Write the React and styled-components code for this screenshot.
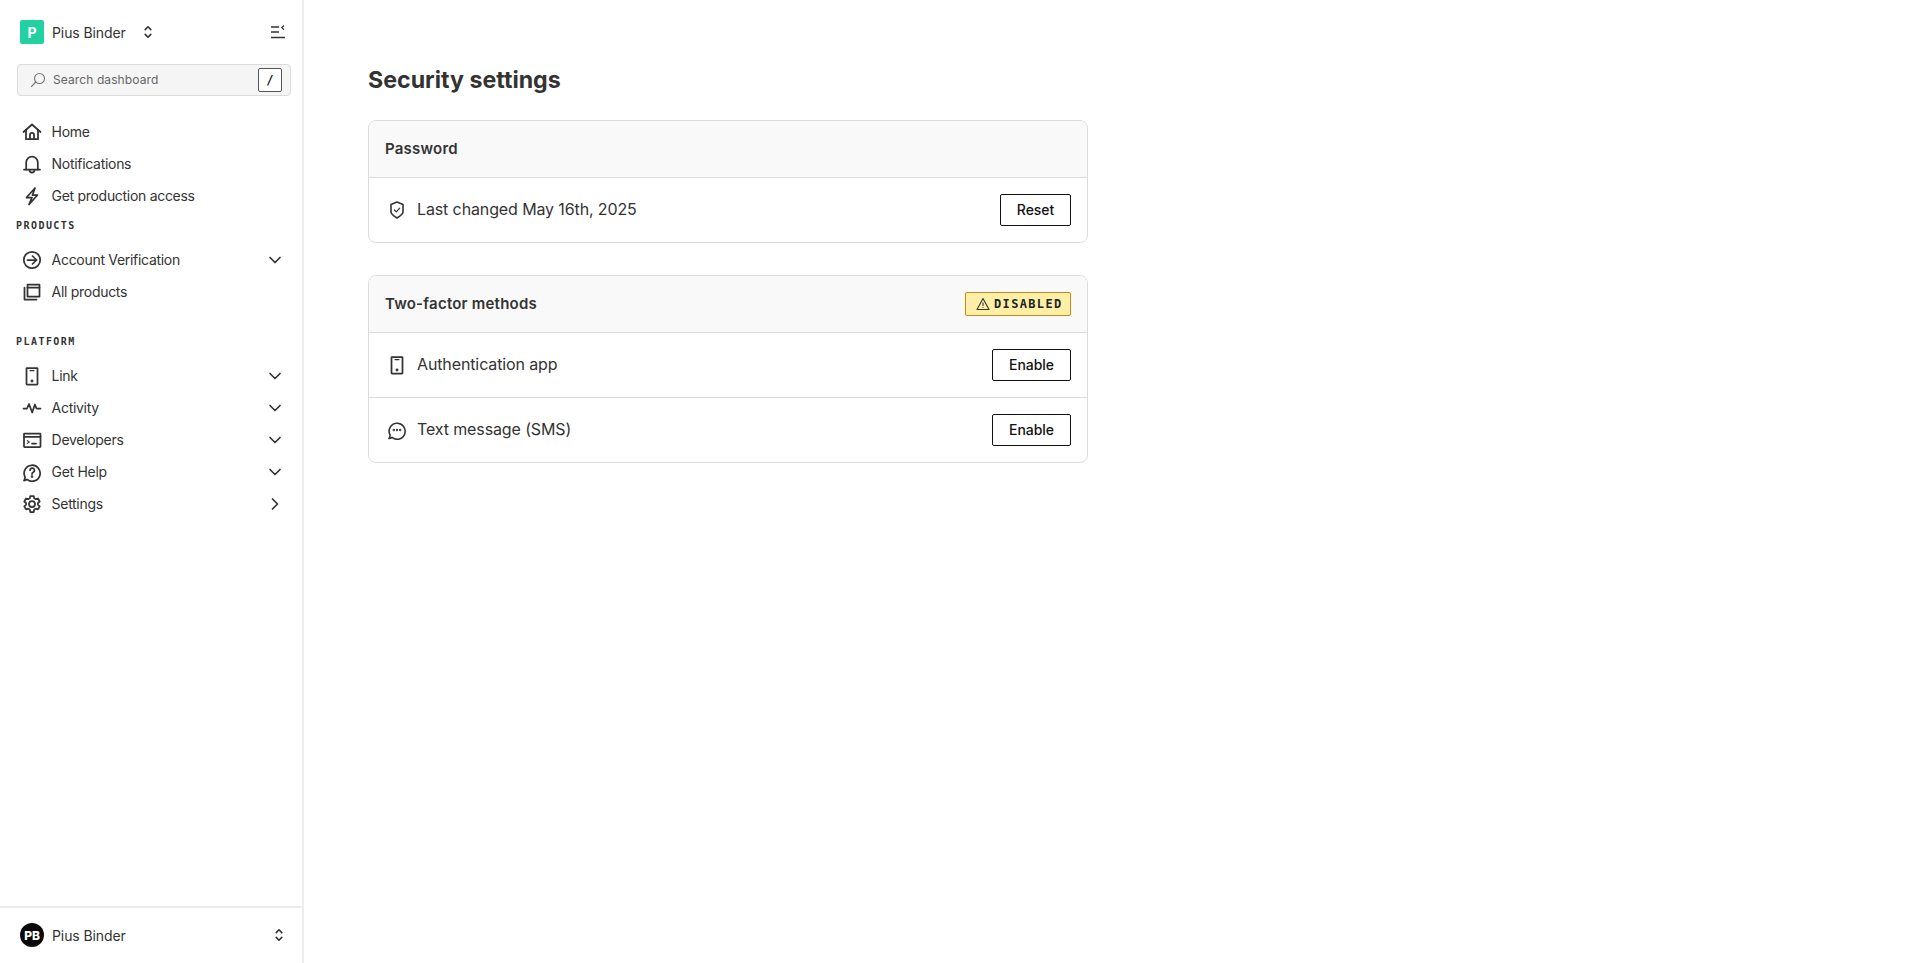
import React from "react";
import styled, { createGlobalStyle } from "styled-components";

const Global = createGlobalStyle`
  html, body { margin: 0; padding: 0; background: #fff; }
  body { font-family: Inter, "Liberation Sans", sans-serif; color: #333; }
  * { box-sizing: border-box; }
`;

const Page = styled.div`
  display: flex;
  height: 963px;
  overflow: hidden;
`;
const Sidebar = styled.aside`
  width: 304px;
  flex: none;
  height: 100%;
  border-right: 2px solid #ececec;
  display: flex;
  flex-direction: column;
`;
const Top = styled.div`
  flex: 1;
  padding: 20px 0 0;
`;
const AccountRow = styled.div`
  display: flex;
  align-items: center;
  height: 24px;
  padding: 0 17px 0 20px;
`;
const Logo = styled.div`
  width: 24px;
  height: 24px;
  border-radius: 2px;
  background: #21d19f;
  color: #fff;
  font-size: 14px;
  font-weight: 700;
  display: flex;
  align-items: center;
  justify-content: center;
  margin-right: 8px;
`;
const AccountName = styled.span`
  font-size: 14px;
  letter-spacing: -0.1px;
  color: #333;
  width: 88px;
`;
const Spacer = styled.div`
  flex: 1;
`;
const Search = styled.div`
  margin: 20px 0 0 17px;
  width: 274px;
  height: 32px;
  border: 1px solid #dcdcdc;
  border-radius: 4px;
  background: #f5f5f5;
  display: flex;
  align-items: center;
  padding: 0 8px 0 12px;
  color: #666;
  font-size: 12px;
  letter-spacing: 0.1px;
`;
const SearchText = styled.span`
  margin-left: 7px;
  flex: 1;
  padding-bottom: 1px;
`;
const Key = styled.div`
  width: 24px;
  height: 24px;
  border: 1px solid #555;
  border-radius: 2px;
  background: #fff;
  color: #111;
  font-family: "DejaVu Sans Mono", monospace;
  font-size: 12px;
  font-weight: 700;
  display: flex;
  align-items: center;
  justify-content: center;
`;
const Nav = styled.nav`
  margin-top: 20px;
  padding: 0 17px 0 22px;
`;
const NavRow = styled.div`
  display: flex;
  align-items: center;
  height: 32px;
  color: #333;
  font-size: 14px;
  letter-spacing: -0.3px;
  & > svg:first-child { margin-right: 9.6px; flex: none; }
`;
const NavLabel = styled.span`
  flex: 1;
  padding-bottom: 1px;
`;
const Section = styled.div`
  font-family: "DejaVu Sans Mono", monospace;
  font-size: 10px;
  font-weight: 700;
  letter-spacing: 1.45px;
  color: #333;
  height: 12px;
  line-height: 12px;
  margin: ${p => p.$top}px 0 ${p => p.$bottom}px -6px;
`;
const Footer = styled.div`
  height: 57px;
  border-top: 2px solid #ececec;
  display: flex;
  align-items: center;
  padding: 0 15px 1px 20px;
  font-size: 14px;
  letter-spacing: -0.1px;
  color: #333;
`;
const Avatar = styled.div`
  width: 24px;
  height: 24px;
  border-radius: 50%;
  background: #0a0a0a;
  color: #fff;
  font-size: 12px;
  font-weight: 800;
  letter-spacing: -0.2px;
  display: flex;
  align-items: center;
  justify-content: center;
  margin-right: 8px;
`;
const Main = styled.main`
  flex: none;
  width: 720px;
  margin-left: 64px;
  padding-top: 64px;
`;
const Title = styled.h1`
  margin: 0 0 24px;
  padding-top: 1px;
  font-size: 23.2px;
  line-height: 31px;
  font-weight: 700;
  color: #333;
`;
const Card = styled.section`
  border: 1px solid #dcdcdc;
  border-radius: 8px;
  margin-bottom: 32px;
  overflow: hidden;
`;
const CardHead = styled.header`
  display: flex;
  align-items: center;
  justify-content: space-between;
  height: 56px;
  padding: 0 16px 0 16px;
  background: #f9f9f9;
  font-size: 15px;
  font-weight: 600;
  letter-spacing: 0.22px;
  color: #333;
`;
const HeadLabel = styled.span`
  padding-bottom: 2px;
`;
const Row = styled.div`
  display: flex;
  align-items: center;
  height: 65px;
  padding: 0 16px 0 18px;
  border-top: 1px solid #dcdcdc;
  font-size: 16px;
  color: #333;
  letter-spacing: -0.12px;
  & > svg { margin-right: 10px; flex: none; }
`;
const RowText = styled.span`
  flex: 1;
  padding-bottom: 2px;
`;
const Button = styled.button`
  height: 32px;
  width: ${p => p.$w}px;
  border: 1px solid #111;
  border-radius: 2px;
  background: #fff;
  color: #111;
  font-family: inherit;
  font-size: 14px;
  font-weight: 500;
  letter-spacing: -0.05px;
  padding: 0 0 1px;
`;
const Badge = styled.div`
  display: flex;
  align-items: center;
  width: 106px;
  height: 24px;
  padding: 0 0 0 10px;
  gap: 4px;
  border: 1px solid #c8891a;
  border-radius: 2px;
  background: #fdf0a6;
  color: #222;
  font-family: "DejaVu Sans Mono", monospace;
  font-size: 12px;
  font-weight: 700;
  letter-spacing: 1.35px;
`;

const Ico = ({ size = 20, children, sw = 1.75 }) => (
  <svg width={size} height={size} viewBox="0 0 20 20" fill="none" stroke="currentColor" strokeWidth={sw} strokeLinecap="round" strokeLinejoin="round">
    {children}
  </svg>
);

const Home = () => <Ico><path d="M1.5 10 10 2.5 18.5 10" /><path d="M4 8v9.2h12V8" /><path d="M8 17v-4.2a2 2 0 0 1 4 0V17" /></Ico>;
const Bell = () => <Ico><path d="M2 15.5h16" /><path d="M4.2 15.5V8.5a5.8 5.8 0 0 1 11.6 0v7" /><path d="M7.5 16a2.5 2.5 0 0 0 5 0" /></Ico>;
const Zap = () => <Ico><path d="M13 2 4.5 11.5H10L7 18.5l8.5-9.5H10.5L13 2Z" /></Ico>;
const ArrowCircle = () => <Ico><circle cx="10" cy="10" r="8.2" /><path d="M5.5 10h9" /><path d="M10.5 6l4 4-4 4" /></Ico>;
const Stack = () => <Ico><rect x="5.5" y="2.5" width="12" height="12" /><path d="M5.5 5.5h12" /><path d="M2.5 5.5v12h12" /></Ico>;
const Phone = () => <Ico><rect x="4.5" y="2" width="11" height="16.5" rx=".6" /><path d="M8 4.6h4" strokeWidth="1.2" /><circle cx="10" cy="15" r=".6" fill="currentColor" /></Ico>;
const Pulse = () => <Ico><path d="M1.5 10.5H5l2-4.5 3.2 8.5 2.7-8 1.6 4H18.5" /></Ico>;
const Terminal = () => <Ico><rect x="2" y="3.5" width="16.5" height="13.5" rx=".6" /><path d="M2 6.8h16.5" /><path d="M5.3 10.6l2 1.4-2 1.4" strokeWidth="1.1" /><path d="M10 13.6h4" /></Ico>;
const HelpBubble = () => <Ico><path d="M2 18.5c1.3 0 2.2-.4 3-1.1a8 8 0 1 0-2-2.5c.2 1.3-.2 2.5-1 3.6Z" /><path d="M8 8.2a2.2 2.2 0 1 1 3.2 2c-.8.4-1.2.9-1.2 1.8" /><circle cx="10" cy="14.6" r=".5" fill="currentColor" /></Ico>;
const Gear = () => <Ico><circle cx="10" cy="10" r="3" /><path d="M8.3 2h3.4l.5 2.3 1.6.9 2.2-.7 1.7 3-1.7 1.5v1.9l1.7 1.5-1.7 3-2.2-.7-1.6.9-.5 2.4H8.3l-.5-2.4-1.6-.9-2.2.7-1.7-3 1.7-1.5V9L2.3 7.5l1.7-3 2.2.7 1.6-.9L8.3 2Z" /></Ico>;
const ChevD = () => <Ico sw={1.7}><path d="M5 7.5 10 12.5l5-5" /></Ico>;
const ChevR = () => <Ico sw={1.7}><path d="M7.5 5 12.5 10l-5 5" /></Ico>;
const UpDown = () => <Ico size={16} sw={2}><path d="M6.5 7 10 3.5 13.5 7" /><path d="M6.5 13 10 16.5 13.5 13" /></Ico>;
const Collapse = () => (
  <svg width="14" height="14" viewBox="0 0 14 14" fill="none" stroke="#333" strokeWidth="1.5">
    <path d="M0 2h8M0 7h8M0 12.5h14" />
    <path d="M13 .5 10.8 2.6 13 4.7" strokeWidth="1.3" />
  </svg>
);
const SearchIco = () => (
  <svg width="16" height="16" viewBox="0 0 16 16" fill="none" stroke="#777" strokeWidth="1.1">
    <circle cx="9.5" cy="6.5" r="5" />
    <path d="M5.8 10 1.5 14.5" strokeLinecap="round" />
  </svg>
);
const Shield = () => <Ico sw={1.6}><path d="M10 2 16 4.5v7.5c0 2-3.5 4.5-6 6-2.5-1.5-6-4-6-6V4.5L10 2Z" /><path d="M7.5 10l1.8 1.8 3.4-3.6" strokeWidth="1.2" /></Ico>;
const Chat = () => <Ico sw={1.6}><path d="M2 18.5c1.3 0 2.2-.4 3-1.1a8 8 0 1 0-2-2.5c.2 1.3-.2 2.5-1 3.6Z" /><circle cx="6.8" cy="10" r=".4" fill="currentColor" /><circle cx="10" cy="10" r=".4" fill="currentColor" /><circle cx="13.2" cy="10" r=".4" fill="currentColor" /></Ico>;
const Warn = () => (
  <svg width="14" height="14" viewBox="0 0 14 14" fill="none" stroke="#333" strokeWidth="1.1" strokeLinejoin="round">
    <path d="M7 1.5 13 12.5H1L7 1.5Z" />
    <path d="M7 5.5v3.5M7 10.2v.8" />
  </svg>
);

const Item = ({ icon, label, end }) => (
  <NavRow>
    {icon}
    <NavLabel>{label}</NavLabel>
    {end}
  </NavRow>
);

export default function App() {
  return (
    <Page>
      <Global />
      <Sidebar>
        <Top>
          <AccountRow>
            <Logo>P</Logo>
            <AccountName>Pius Binder</AccountName>
            <UpDown />
            <Spacer />
            <Collapse />
          </AccountRow>
          <Search>
            <SearchIco />
            <SearchText>Search dashboard</SearchText>
            <Key>/</Key>
          </Search>
          <Nav>
            <Item icon={<Home />} label="Home" />
            <Item icon={<Bell />} label="Notifications" />
            <Item icon={<Zap />} label="Get production access" />
            <Section $top={8} $bottom={12}>PRODUCTS</Section>
            <Item icon={<ArrowCircle />} label="Account Verification" end={<ChevD />} />
            <Item icon={<Stack />} label="All products" />
            <Section $top={28} $bottom={12}>PLATFORM</Section>
            <Item icon={<Phone />} label="Link" end={<ChevD />} />
            <Item icon={<Pulse />} label="Activity" end={<ChevD />} />
            <Item icon={<Terminal />} label="Developers" end={<ChevD />} />
            <Item icon={<HelpBubble />} label="Get Help" end={<ChevD />} />
            <Item icon={<Gear />} label="Settings" end={<ChevR />} />
          </Nav>
        </Top>
        <Footer>
          <Avatar>PB</Avatar>
          <span>Pius Binder</span>
          <Spacer />
          <UpDown />
        </Footer>
      </Sidebar>
      <Main>
        <Title>Security settings</Title>
        <Card>
          <CardHead><HeadLabel>Password</HeadLabel></CardHead>
          <Row>
            <Shield />
            <RowText>Last changed May 16th, 2025</RowText>
            <Button $w={71}>Reset</Button>
          </Row>
        </Card>
        <Card>
          <CardHead>
            <HeadLabel>Two-factor methods</HeadLabel>
            <Badge><Warn />DISABLED</Badge>
          </CardHead>
          <Row>
            <Phone />
            <RowText>Authentication app</RowText>
            <Button $w={79}>Enable</Button>
          </Row>
          <Row>
            <Chat />
            <RowText>Text message (SMS)</RowText>
            <Button $w={79}>Enable</Button>
          </Row>
        </Card>
      </Main>
    </Page>
  );
}
